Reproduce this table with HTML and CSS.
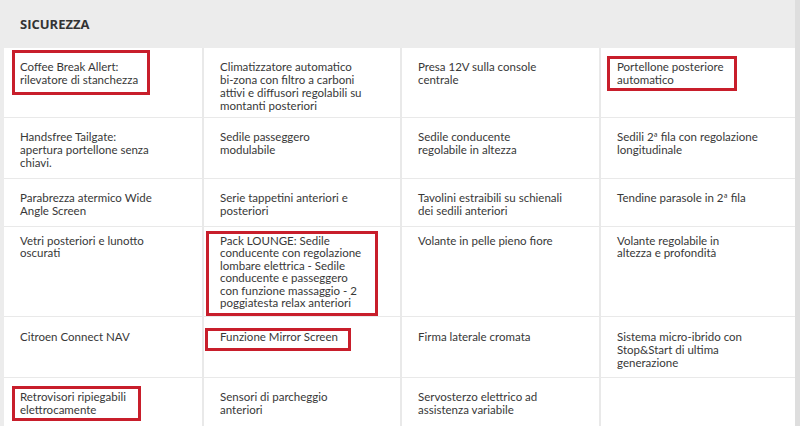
FILE: index.html
```html
<!DOCTYPE html>
<html lang="it">
<head>
<meta charset="utf-8">
<title>Sicurezza</title>
<link rel="stylesheet" href="styles.css">
</head>
<body>
<div class="page">
  <h2 class="section-title">SICUREZZA</h2>
  <div class="table">
    <div class="cell"><span class="mark mark-coffee"></span>Coffee Break Allert:<br>rilevatore di stanchezza</div>
    <div class="cell">Climatizzatore automatico<br>bi-zona con filtro a carboni<br>attivi e diffusori regolabili su<br>montanti posteriori</div>
    <div class="cell">Presa 12V sulla console<br>centrale</div>
    <div class="cell"><span class="mark mark-portellone"></span>Portellone posteriore<br>automatico</div>

    <div class="cell">Handsfree Tailgate:<br>apertura portellone senza<br>chiavi.</div>
    <div class="cell">Sedile passeggero<br>modulabile</div>
    <div class="cell">Sedile conducente<br>regolabile in altezza</div>
    <div class="cell">Sedili 2ª fila con regolazione<br>longitudinale</div>

    <div class="cell">Parabrezza atermico Wide<br>Angle Screen</div>
    <div class="cell">Serie tappetini anteriori e<br>posteriori</div>
    <div class="cell">Tavolini estraibili su schienali<br>dei sedili anteriori</div>
    <div class="cell">Tendine parasole in 2ª fila</div>

    <div class="cell cell-tight">Vetri posteriori e lunotto<br>oscurati</div>
    <div class="cell cell-tight"><span class="mark mark-lounge"></span>Pack LOUNGE: Sedile<br>conducente con regolazione<br>lombare elettrica - Sedile<br>conducente e passeggero<br>con funzione massaggio - 2<br>poggiatesta relax anteriori</div>
    <div class="cell cell-tight">Volante in pelle pieno fiore</div>
    <div class="cell cell-tight">Volante regolabile in<br>altezza e profondità</div>

    <div class="cell cell-low">Citroen Connect NAV</div>
    <div class="cell cell-low"><span class="mark mark-mirror"></span>Funzione Mirror Screen</div>
    <div class="cell cell-low">Firma laterale cromata</div>
    <div class="cell cell-low">Sistema micro-ibrido con<br>Stop&amp;Start di ultima<br>generazione</div>

    <div class="cell"><span class="mark mark-retro"></span>Retrovisori ripiegabili<br>elettrocamente</div>
    <div class="cell">Sensori di parcheggio<br>anteriori</div>
    <div class="cell">Servosterzo elettrico ad<br>assistenza variabile</div>
    <div class="cell"></div>
  </div>
</div>
</body>
</html>
```

FILE: styles.css
```css
* { box-sizing: border-box; }
html, body {
  margin: 0;
  padding: 0;
  background: #ececec;
  width: 800px;
  height: 426px;
  overflow: hidden;
}
.page {
  font-family: Lato, "Open Sans", sans-serif;
  color: #383838;
  padding-right: 5px;
  background: linear-gradient(to right, #ececec 795px, #dedede 795px);
}
.section-title {
  margin: 0;
  height: 48px;
  padding: 17px 0 0 20px;
  font-family: "Open Sans", sans-serif;
  font-size: 13px;
  line-height: 15px;
  font-weight: 700;
  color: #333;
}
.table {
  margin-left: 4px;
  display: grid;
  grid-template-columns: 198px 196px 197px 194px;
  grid-template-rows: 69px 60px 47px 89px 60px 48px;
  column-gap: 2px;
  row-gap: 1px;
  background: #e9e9e9;
}
.cell {
  position: relative;
  background: #fff;
  padding: 12px 8px 0 16px;
  font-size: 11.5px;
  line-height: 13px;
  white-space: nowrap;
}
.cell-tight {
  padding-top: 8px;
  line-height: 12.4px;
}
.cell-low {
  padding-top: 13px;
}
.mark {
  position: absolute;
  border: 3px solid #c81e2b;
  pointer-events: none;
}
.mark-coffee { left: 8px; top: 2px; width: 138px; height: 45px; }
.mark-portellone { left: 6px; top: 8px; width: 130px; height: 35px; }
.mark-lounge { left: 2px; top: 4px; width: 172px; height: 85px; }
.mark-mirror { left: 1px; top: 11px; width: 146px; height: 23px; }
.mark-retro { left: 8px; top: 8px; width: 129px; height: 35px; }
```
